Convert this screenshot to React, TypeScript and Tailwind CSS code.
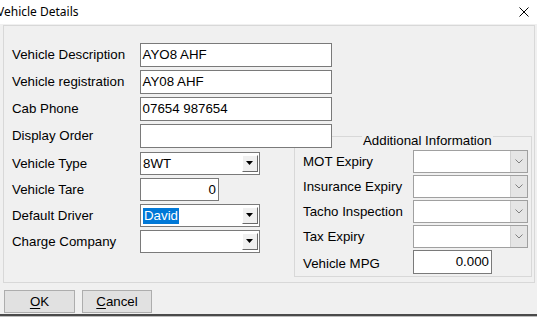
const font = { fontFamily: '"Liberation Sans", Arial, sans-serif' };

function TextBox({ value = '', width, height = 24, right = false }: { value?: string; width: number; height?: number; right?: boolean }) {
  return (
    <div
      className={`flex items-center bg-white border border-[#7a7a7a] px-[2px] text-black ${right ? 'justify-end' : ''}`}
      style={{ width, height }}
    >
      <span className="leading-none">{value}</span>
    </div>
  );
}

function ClassicCombo({ value = '', selected = false }: { value?: string; selected?: boolean }) {
  return (
    <div className="flex items-center w-[120px] h-[23px] bg-white border border-[#7a7a7a] pl-[2px] pr-[1px]">
      <div className="flex-1 flex items-center">
        {selected ? (
          <span className="bg-[#0078d7] text-white leading-[16px] px-[1px]">{value}</span>
        ) : (
          <span className="leading-none">{value}</span>
        )}
      </div>
      <div className="w-[16px] h-[17px] flex items-center justify-center bg-[#f0f0f0] border border-t-white border-l-white border-r-[#696969] border-b-[#696969]">
        <svg width="8" height="5" viewBox="0 0 8 5">
          <path d="M0 0H7L3.5 4Z" fill="#000" />
        </svg>
      </div>
    </div>
  );
}

function ModernCombo() {
  return (
    <div className="flex w-[115px] h-[23px] bg-white border border-[#a0a0a0]">
      <div className="flex-1" />
      <div className="w-[17px] h-full flex items-center justify-center bg-[#e5e5e5] border-l border-[#d0d0d0]">
        <svg width="8" height="5" viewBox="0 0 8 5">
          <path d="M0.5 0.5L4 4L7.5 0.5" fill="none" stroke="#808080" strokeWidth="1" />
        </svg>
      </div>
    </div>
  );
}

export default function App() {
  return (
    <div className="w-[537px] h-[317px] bg-[#f0f0f0] text-[13.3px] text-black overflow-hidden flex flex-col" style={font}>
      <div className="h-[24px] bg-white flex items-center justify-between shrink-0">
        <span className="-ml-[3px] text-[12px]" style={{ fontFamily: '"Noto Sans", "Open Sans", sans-serif' }}>
          Vehicle Details
        </span>
        <svg width="10" height="10" viewBox="0 0 10 10" className="mr-[8px]">
          <path d="M0.5 0.5L9.5 9.5M9.5 0.5L0.5 9.5" stroke="#000" strokeWidth="1" />
        </svg>
      </div>

      <div className="mt-[1px] ml-[3px] w-[532px] h-[258px] border border-[#d8d8d8] flex pt-[17px] pl-[8px] shrink-0">
        <div className="relative z-10 w-[320px] shrink-0 flex flex-col">
          <div className="flex items-center h-[24px]">
            <span className="w-[128px]">Vehicle Description</span>
            <TextBox value="AYO8 AHF" width={193} />
          </div>
          <div className="flex items-center h-[24px] mt-[3px]">
            <span className="w-[128px]">Vehicle registration</span>
            <TextBox value="AY08 AHF" width={193} />
          </div>
          <div className="flex items-center h-[24px] mt-[3px]">
            <span className="w-[128px]">Cab Phone</span>
            <TextBox value="07654 987654" width={193} />
          </div>
          <div className="flex items-center h-[24px] mt-[3px]">
            <span className="w-[128px]">Display Order</span>
            <TextBox width={193} />
          </div>
          <div className="flex items-center h-[23px] mt-[4px]">
            <span className="w-[128px]">Vehicle Type</span>
            <ClassicCombo value="8WT" />
          </div>
          <div className="flex items-center h-[23px] mt-[3px]">
            <span className="w-[128px]">Vehicle Tare</span>
            <TextBox value="0" width={79} height={23} right />
          </div>
          <div className="flex items-center h-[23px] mt-[3px]">
            <span className="w-[128px]">Default Driver</span>
            <ClassicCombo value="David" selected />
          </div>
          <div className="flex items-center h-[23px] mt-[3px]">
            <span className="w-[128px]">Charge Company</span>
            <ClassicCombo />
          </div>
        </div>

        <div className="relative -ml-[38px] mt-[93px] w-[238px] h-[141px] border border-[#d8d8d8] pt-[13px] pl-[8px] flex flex-col shrink-0">
          <span className="absolute -top-[4px] left-[67px] leading-[15px] bg-[#f0f0f0] px-[1px]">Additional Information</span>
          <div className="flex items-center h-[23px]">
            <span className="w-[110px]">MOT Expiry</span>
            <ModernCombo />
          </div>
          <div className="flex items-center h-[23px] mt-[2px]">
            <span className="w-[110px]">Insurance Expiry</span>
            <ModernCombo />
          </div>
          <div className="flex items-center h-[23px] mt-[2px]">
            <span className="w-[110px]">Tacho Inspection</span>
            <ModernCombo />
          </div>
          <div className="flex items-center h-[23px] mt-[2px]">
            <span className="w-[110px]">Tax Expiry</span>
            <ModernCombo />
          </div>
          <div className="flex items-center h-[24px] mt-[2px]">
            <span className="w-[110px] pt-[4px]">Vehicle MPG</span>
            <TextBox value="0.000" width={79} height={24} right />
          </div>
        </div>
      </div>

      <div className="flex gap-[7px] ml-[4px] mt-[7px] shrink-0">
        <button className="w-[71px] h-[23px] bg-[#e1e1e1] border border-[#adadad] leading-none">
          <span className="underline underline-offset-2">O</span>K
        </button>
        <button className="w-[70px] h-[23px] bg-[#e1e1e1] border border-[#adadad] leading-none">
          <span className="underline underline-offset-2">C</span>ancel
        </button>
      </div>

      <div className="mt-[1px] h-[2px] bg-[#4a4a4a] shrink-0" />
      <div className="flex-1 bg-[#bdbdbd]" />
    </div>
  );
}
